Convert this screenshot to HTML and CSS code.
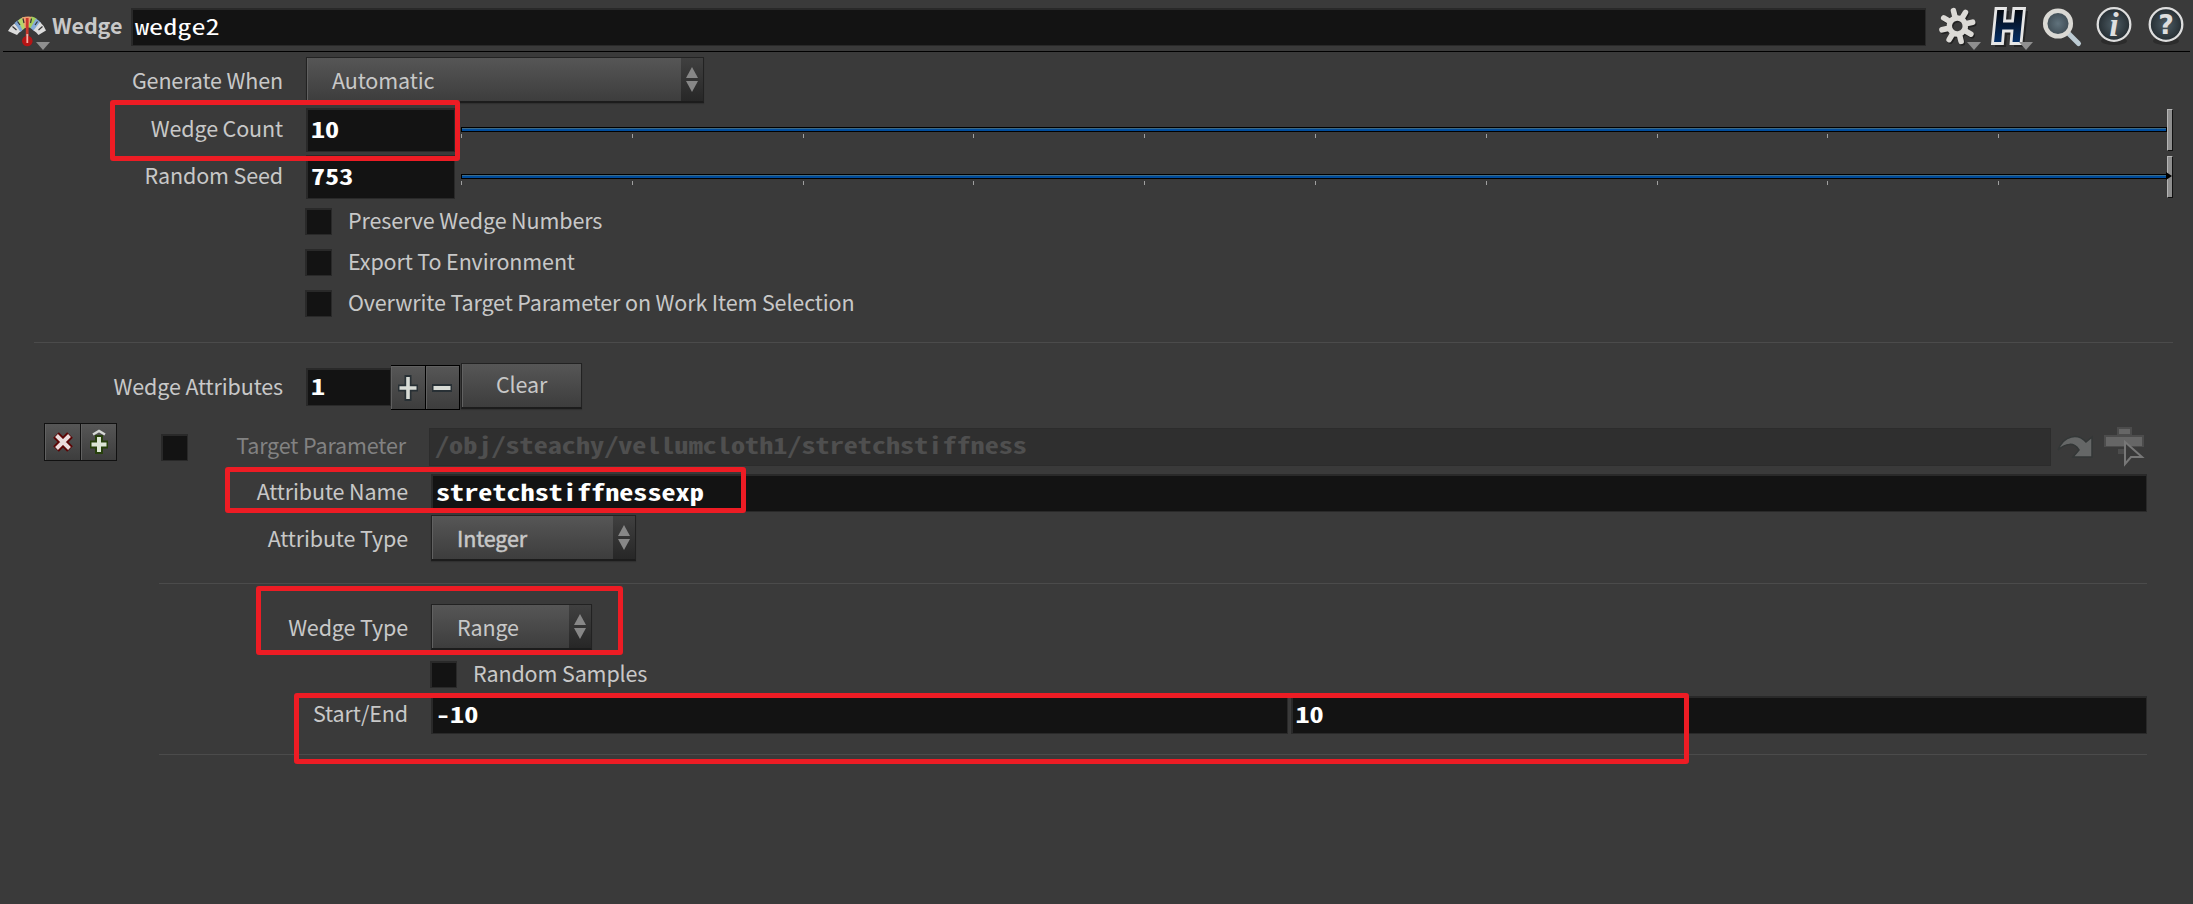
FILE: index.html
```html
<!DOCTYPE html>
<html lang="en">
<head>
    <meta charset="UTF-8">
    <title>Wedge - wedge2</title>
    <link rel="stylesheet" href="styles.css">
</head>
<body>
    <header class="node-bar">
        <svg class="node-icon" width="44" height="40" viewBox="0 0 44 40">
            <path d="M0 16 A22 22 0 0 1 6.500 8.500 L14 15.500 A14 14 0 0 0 9 20Z" fill="#dcdcdc"/>
            <path d="M6.500 8 A22 22 0 0 1 11.500 4.500 L16.500 13 L12.500 17Z" fill="#7fa6d6"/>
            <path d="M10 5.500 A22 22 0 0 1 15.500 2 L17.500 12.500 L14.500 15Z" fill="#b5d66a"/>
            <path d="M14 2.500 A22 22 0 0 1 24.500 2 L21 12.500 A14 14 0 0 0 17 13Z" fill="#f0a070"/>
            <path d="M23.500 1.500 A22 22 0 0 1 28.500 3.500 L23.500 13.500 L20 12Z" fill="#a5cf5c"/>
            <path d="M28 3.500 A22 22 0 0 1 33 8 L26 16 L22.500 13Z" fill="#86abd8"/>
            <path d="M32 7 A22 22 0 0 1 38 15.500 L30.500 20 A14 14 0 0 0 25.500 15.500Z" fill="#dcdcdc"/>
            <path d="M4.500 11.500 L8.500 15 M9.500 6.500 L12 10 M15 3.500 L16 8 M23.500 3.500 L22.500 8 M29.500 6.500 L27 10 M34.500 11.500 L30.500 15" stroke="#333" stroke-width="1.200"/>
            <rect x="17.800" y="3" width="2.800" height="22" fill="#c8372d"/>
            <circle cx="19.300" cy="26" r="5.300" fill="#b51515"/>
            <path d="M19.300 19 V28" stroke="#f3b0a8" stroke-width="1.800"/>
            <path d="M28 27 H42 L35 35Z" fill="#8f8f8f"/>
        </svg>
        <span class="node-type">Wedge</span>
        <div class="field node-name"><span>wedge2</span></div>
        <div class="tools">
            <svg width="44" height="46" viewBox="0 0 44 46">
                <defs>
                    <g id="gear" stroke-width="5.600" stroke-linecap="round" fill="none">
                        <circle r="8" stroke-width="5.500"/>
                        <path d="M0 -10V-15.800M0 10V15.800M-10 0H-15.800M10 0H15.800M-7 -7L-11.200 -11.200M7 7L11.200 11.200M-7 7L-11.200 11.200M7 -7L11.200 -11.200"/>
                    </g>
                </defs>
                <use href="#gear" transform="translate(21.500 22.500) rotate(-14)" stroke="#222"/>
                <use href="#gear" transform="translate(20.300 21) rotate(-14)" stroke="#dcdad6"/>
                <path d="M30 37 H44 L37 45Z" fill="#8f8f8f"/>
            </svg>
            <svg width="44" height="46" viewBox="0 0 44 46">
                <defs>
                    <linearGradient id="navy" x1="0" y1="0" x2="0" y2="1">
                        <stop offset="0" stop-color="#05070b"/>
                        <stop offset="1" stop-color="#04306a"/>
                    </linearGradient>
                </defs>
                <path d="M10 6 H20 L19 18 H25 L27 6 H39 L35 42 H25 L26 30 H18 L17 42 H6Z" fill="#252525"/>
                <path d="M7 3.500 H16.500 L15.500 16 H23.500 L24.800 3.500 H35.500 L32 38.500 H22 L23 26 H14.500 L13.500 38.500 H3.500Z" fill="url(#navy)" stroke="#e6e6e6" stroke-width="2.800"/>
                <path d="M30 37 H44 L37 45Z" fill="#8f8f8f"/>
            </svg>
            <svg width="44" height="46" viewBox="0 0 44 46">
                <defs>
                    <radialGradient id="glass">
                        <stop offset="0" stop-color="#60727c"/>
                        <stop offset="1" stop-color="#3c4951"/>
                    </radialGradient>
                </defs>
                <path d="M28 29 L37.500 38.500" stroke="#bccbd3" stroke-width="5" stroke-linecap="round"/>
                <circle cx="17" cy="18.500" r="12.800" fill="url(#glass)" stroke="#dad9d4" stroke-width="4.500"/>
            </svg>
            <svg width="44" height="46" viewBox="0 0 44 46">
                <defs>
                    <radialGradient id="badge">
                        <stop offset="0" stop-color="#4d5c64"/>
                        <stop offset="1" stop-color="#252d32"/>
                    </radialGradient>
                </defs>
                <ellipse cx="21" cy="36" rx="13" ry="4" fill="#2c2c2c"/>
                <circle cx="21" cy="19.500" r="16.300" fill="url(#badge)" stroke="#dedede" stroke-width="2.300"/>
                <text class="info" x="21" y="31" text-anchor="middle">i</text>
            </svg>
            <svg width="40" height="46" viewBox="0 0 40 46">
                <ellipse cx="21" cy="36" rx="13" ry="4" fill="#2c2c2c"/>
                <circle cx="21" cy="19.500" r="16.300" fill="url(#badge)" stroke="#dedede" stroke-width="2.300"/>
                <text class="help" x="21" y="29" text-anchor="middle">?</text>
            </svg>
        </div>
    </header>

    <main class="params">
        <div class="row tall first">
            <span class="label">Generate When</span>
            <div class="menu wide"><span class="menu-text">Automatic</span><span class="arrows"></span></div>
        </div>
        <div class="row num">
            <span class="label">Wedge Count</span>
            <div class="field number"><span>10</span></div>
            <div class="slider">
                <div class="track"></div>
                <div class="ticks"></div>
                <div class="handle"></div>
            </div>
        </div>
        <div class="row num seed">
            <span class="label">Random Seed</span>
            <div class="field number"><span>753</span></div>
            <div class="slider">
                <div class="track"></div>
                <div class="ticks"></div>
                <div class="handle over"></div>
            </div>
        </div>
        <div class="row toggle top"><span class="check"></span><span class="toggle-text">Preserve Wedge Numbers</span></div>
        <div class="row toggle"><span class="check"></span><span class="toggle-text">Export To Environment</span></div>
        <div class="row toggle"><span class="check"></span><span class="toggle-text">Overwrite Target Parameter on Work Item Selection</span></div>

        <div class="rule"></div>

        <div class="row attrs">
            <span class="label">Wedge Attributes</span>
            <div class="field count"><span>1</span></div>
            <div class="stepper">
                <div class="step"><svg width="24" height="28" viewBox="0 0 24 28"><path d="M12 1V27M2 14H22" stroke="#283035" stroke-width="7"/><path d="M12 3V25M3.500 14H20.500" stroke="#d9dcd6" stroke-width="3.600"/></svg></div>
                <div class="step"><svg width="24" height="28" viewBox="0 0 24 28"><path d="M2 14H22" stroke="#283035" stroke-width="8"/><path d="M3.500 14H20.500" stroke="#d9dcd6" stroke-width="4"/></svg></div>
            </div>
            <div class="clear">Clear</div>
        </div>

        <section class="multi">
            <div class="multi-buttons">
                <div class="mini"><svg width="22" height="24" viewBox="0 0 22 24"><path d="M4 5L18 19M18 5L4 19" stroke="#5c0505" stroke-width="8"/><path d="M4.500 5.500L17.500 18.500M17.500 5.500L4.500 18.500" stroke="#eadcdc" stroke-width="4"/></svg></div>
                <div class="mini"><svg width="22" height="26" viewBox="0 0 22 26"><path d="M11 6V25M2 15.500H20" stroke="#27400c" stroke-width="8"/><path d="M11 8V23M3.500 15.500H18.500" stroke="#dde6d6" stroke-width="4"/><path d="M5 5.500L11 2L17 5.500" fill="none" stroke="#d5d8d5" stroke-width="2.500"/></svg></div>
            </div>
            <div class="multi-body">
                <div class="row target">
                    <span class="check"></span>
                    <span class="label dim">Target Parameter</span>
                    <div class="field disabled"><span>/obj/steachy/vellumcloth1/stretchstiffness</span></div>
                    <svg class="jump" width="40" height="30" viewBox="0 0 40 30">
                        <path d="M2 18 C8 3 22 1 30 10 L36 5 V25 H17 L23 18 C18 10 10 11 2 18Z" fill="#656767" stroke="#333737" stroke-width="1.500"/>
                    </svg>
                    <svg class="pick" width="42" height="42" viewBox="0 0 42 42">
                        <path d="M14 1H29V9H41V21H1V9H14Z M15 23H21V28H15Z" fill="#4c4c4c"/>
                        <path d="M16 3H27V8H16Z M3 11H39V20H3Z" fill="#666"/>
                        <path d="M22 16V38L28 31H39Z" fill="#393939" stroke="#777" stroke-width="2"/>
                    </svg>
                </div>
                <div class="row name">
                    <span class="label">Attribute Name</span>
                    <div class="field"><span>stretchstiffnessexp</span></div>
                </div>
                <div class="row type">
                    <span class="label">Attribute Type</span>
                    <div class="menu integer"><span class="menu-text">Integer</span><span class="arrows"></span></div>
                </div>
                <div class="rule inner"></div>
                <div class="row wedge-type">
                    <span class="label">Wedge Type</span>
                    <div class="menu range"><span class="menu-text">Range</span><span class="arrows"></span></div>
                </div>
                <div class="row toggle samples"><span class="check"></span><span class="toggle-text">Random Samples</span></div>
                <div class="row range-row">
                    <span class="label">Start/End</span>
                    <div class="field"><span>-10</span></div>
                    <div class="field"><span>10</span></div>
                </div>
                <div class="rule inner last"></div>
            </div>
        </section>
    </main>

    <!-- highlight boxes drawn over the panel -->
    <div class="mark mark-count"></div>
    <div class="mark mark-name"></div>
    <div class="mark mark-type"></div>
    <div class="mark mark-range"></div>
</body>
</html>
```
FILE: styles.css
```css
* {
    box-sizing: border-box;
}
body {
    margin: 0;
    height: 904px;
    position: relative;
    overflow: hidden;
    background: #3a3a3a;
    color: #c8c8c8;
    font-family: "Noto Sans CJK JP", "Noto Sans", sans-serif;
    font-size: 21.5px;
    letter-spacing: -0.13px;
    line-height: 30px;
    white-space: nowrap;
}
svg {
    display: block;
    flex: none;
}

/* header */
.node-bar {
    display: flex;
    height: 52px;
    margin: 0 3px;
    padding-left: 5px;
    border-bottom: 1px solid #000;
}
.node-icon {
    margin-top: 15px;
}
.node-type {
    width: 79px;
    padding-top: 10px;
    font-weight: bold;
}
.field {
    background: #131313;
    border: 2px solid #292929;
    border-right-width: 1px;
    border-bottom-width: 1px;
    color: #fff;
    font-family: "Noto Sans Mono CJK JP", "DejaVu Sans Mono", monospace;
    font-size: 28.2px;
    letter-spacing: 0;
    font-weight: bold;
    padding-left: 3px;
    display: flex;
    align-items: center;
}
.field span {
    transform: translateY(-2px) scaleY(0.78);
}
.node-name {
    width: 1795px;
    height: 38px;
    margin-top: 8px;
    padding-left: 2px;
    font-weight: normal;
}
.tools {
    display: flex;
    gap: 8px;
    margin-left: 11px;
    padding-top: 5px;
}
.info {
    font: italic bold 34px "Liberation Serif", serif;
    fill: #dedede;
}
.help {
    font: bold 27px "DejaVu Sans", sans-serif;
    fill: #dedede;
}

/* parameter rows */
.row {
    display: flex;
    align-items: center;
}
.label {
    width: 283px;
    margin-right: 23px;
    padding-bottom: 4px;
    text-align: right;
    flex: none;
}
.tall .label,
.type .label,
.wedge-type .label {
    padding-bottom: 0;
}
.tall {
    height: 46px;
}
.first {
    margin-top: 5px;
}
.num {
    height: 44px;
    margin-top: 5px;
}
.seed {
    margin-top: 3px;
}
.number {
    width: 149px;
    height: 44px;
}
.menu {
    display: flex;
    height: 46px;
    border: 1px solid #222;
    border-bottom: 2px solid #1c1c1c;
    background: linear-gradient(#565656, #3d3d3d);
    box-shadow: inset 1px 0 #616161, 0 1px 1px #303030;
}
.menu-text {
    flex: 1;
    padding: 7px 0 0 25px;
}
.arrows {
    width: 22px;
    background: linear-gradient(#404040, #272727);
    display: flex;
    flex-direction: column;
    align-items: center;
    justify-content: center;
    gap: 3px;
}
.arrows::before,
.arrows::after {
    content: "";
    width: 12px;
    height: 11px;
    background: #878787;
    clip-path: polygon(50% 0, 100% 100%, 0 100%);
}
.arrows::after {
    clip-path: polygon(0 0, 100% 0, 50% 100%);
}
.wide {
    width: 398px;
}

/* sliders */
.slider {
    position: relative;
    width: 1712px;
    height: 42px;
    margin-left: 6px;
    padding-top: 18px;
}
.track {
    width: 1706px;
    height: 5px;
    border: 1px solid #000;
    background: linear-gradient(#3c6a86 1px, #004c9c 1px);
}
.ticks {
    height: 4px;
    margin-top: 2px;
    width: 1540px;
    background: repeating-linear-gradient(90deg, #a0a0a0 0 1px, transparent 1px 170.8px);
}
.handle {
    position: absolute;
    right: 0;
    top: 0;
    width: 6px;
    height: 42px;
    background: #8e8e8e;
    border: 1px solid #b4b4b4;
    border-right-color: #111;
    border-bottom-color: #111;
}
.over::after {
    content: "";
    position: absolute;
    left: -2px;
    top: 15px;
    border: 4px solid transparent;
    border-left: 6px solid #000;
    border-right: 0;
}

/* toggles */
.check {
    width: 27px;
    height: 27px;
    margin-right: 16px;
    background: #131313;
    border: 2px solid #292929;
    border-right-width: 1px;
    border-bottom-width: 1px;
    flex: none;
}
.toggle {
    height: 27px;
    margin-top: 14px;
    padding-left: 305px;
}
.toggle-text {
    padding-bottom: 4px;
}
.top {
    margin-top: 9px;
}
.rule {
    height: 1px;
    margin: 25px 20px 0 34px;
    background: #4b4b4b;
}

/* wedge attributes */
.attrs {
    align-items: flex-start;
    height: 47px;
    margin-top: 20px;
}
.attrs .label {
    padding-top: 8px;
}
.count {
    width: 85px;
    height: 38px;
    margin-top: 5px;
}
.stepper {
    display: flex;
    width: 69px;
    height: 45px;
    margin-top: 2px;
    border: 1px solid #000;
    border-left: 0;
}
.step {
    flex: 1;
    display: flex;
    align-items: center;
    justify-content: center;
    background: linear-gradient(#565656, #3d3d3d);
    box-shadow: inset 1px 1px #606060;
}
.step + .step {
    border-left: 1px solid #000;
}
.clear {
    width: 121px;
    height: 46px;
    margin-left: 1px;
    padding-top: 5px;
    text-align: center;
    border: 1px solid #222;
    border-bottom: 2px solid #1c1c1c;
    background: linear-gradient(#565656, #3d3d3d);
    box-shadow: inset 1px 0 #616161, 0 1px 1px #303030;
}

/* multiparm block */
.multi {
    display: flex;
    margin-top: 13px;
    padding-left: 44px;
}
.multi-buttons {
    display: flex;
    width: 73px;
    height: 38px;
    border: 1px solid #111;
}
.mini {
    flex: 1;
    display: flex;
    align-items: center;
    justify-content: center;
    background: linear-gradient(#565656, #3d3d3d);
    box-shadow: inset 1px 0 #616161;
}
.mini + .mini {
    border-left: 1px solid #111;
}
.multi-body {
    width: 2030px;
    padding: 4px 0 0 42px;
}
.multi-body .label {
    width: 249px;
}
.target {
    height: 40px;
}
.target .check {
    margin: 1px 0 0 2px;
}
.multi-body .dim {
    width: 218px;
    color: #828282;
}
.disabled {
    width: 1622px;
    height: 38px;
    margin-right: 5px;
    background: #2f2f2f;
    border: 1px solid #2c2c2c;
    color: #4f4f4f;
    padding-left: 5px;
}
.pick {
    margin-left: 7px;
}
.name {
    height: 38px;
    margin-top: 7px;
}
.name .field,
.range-row .field {
    flex: 1;
    height: 38px;
}
.type {
    height: 46px;
    margin-top: 3px;
}
.integer {
    width: 205px;
    -webkit-text-stroke: 0.5px #c8c8c8;
}
.inner {
    margin: 22px 0 0;
}
.wedge-type {
    height: 46px;
    margin-top: 20px;
}
.range {
    width: 161px;
}
.samples {
    margin-top: 11px;
    padding-left: 271px;
}
.range-row {
    height: 38px;
    margin-top: 8px;
    gap: 3px;
}
.range-row .label {
    margin-right: 20px;
}
.last {
    margin-top: 20px;
}

/* highlight boxes */
.mark {
    position: absolute;
    border: 5px solid #ed1c24;
    border-radius: 3px;
}
.mark-count {
    left: 110px;
    top: 100px;
    width: 350px;
    height: 61px;
}
.mark-name {
    left: 225px;
    top: 467px;
    width: 521px;
    height: 46px;
}
.mark-type {
    left: 256px;
    top: 586px;
    width: 367px;
    height: 69px;
}
.mark-range {
    left: 294px;
    top: 693px;
    width: 1395px;
    height: 71px;
}
```
